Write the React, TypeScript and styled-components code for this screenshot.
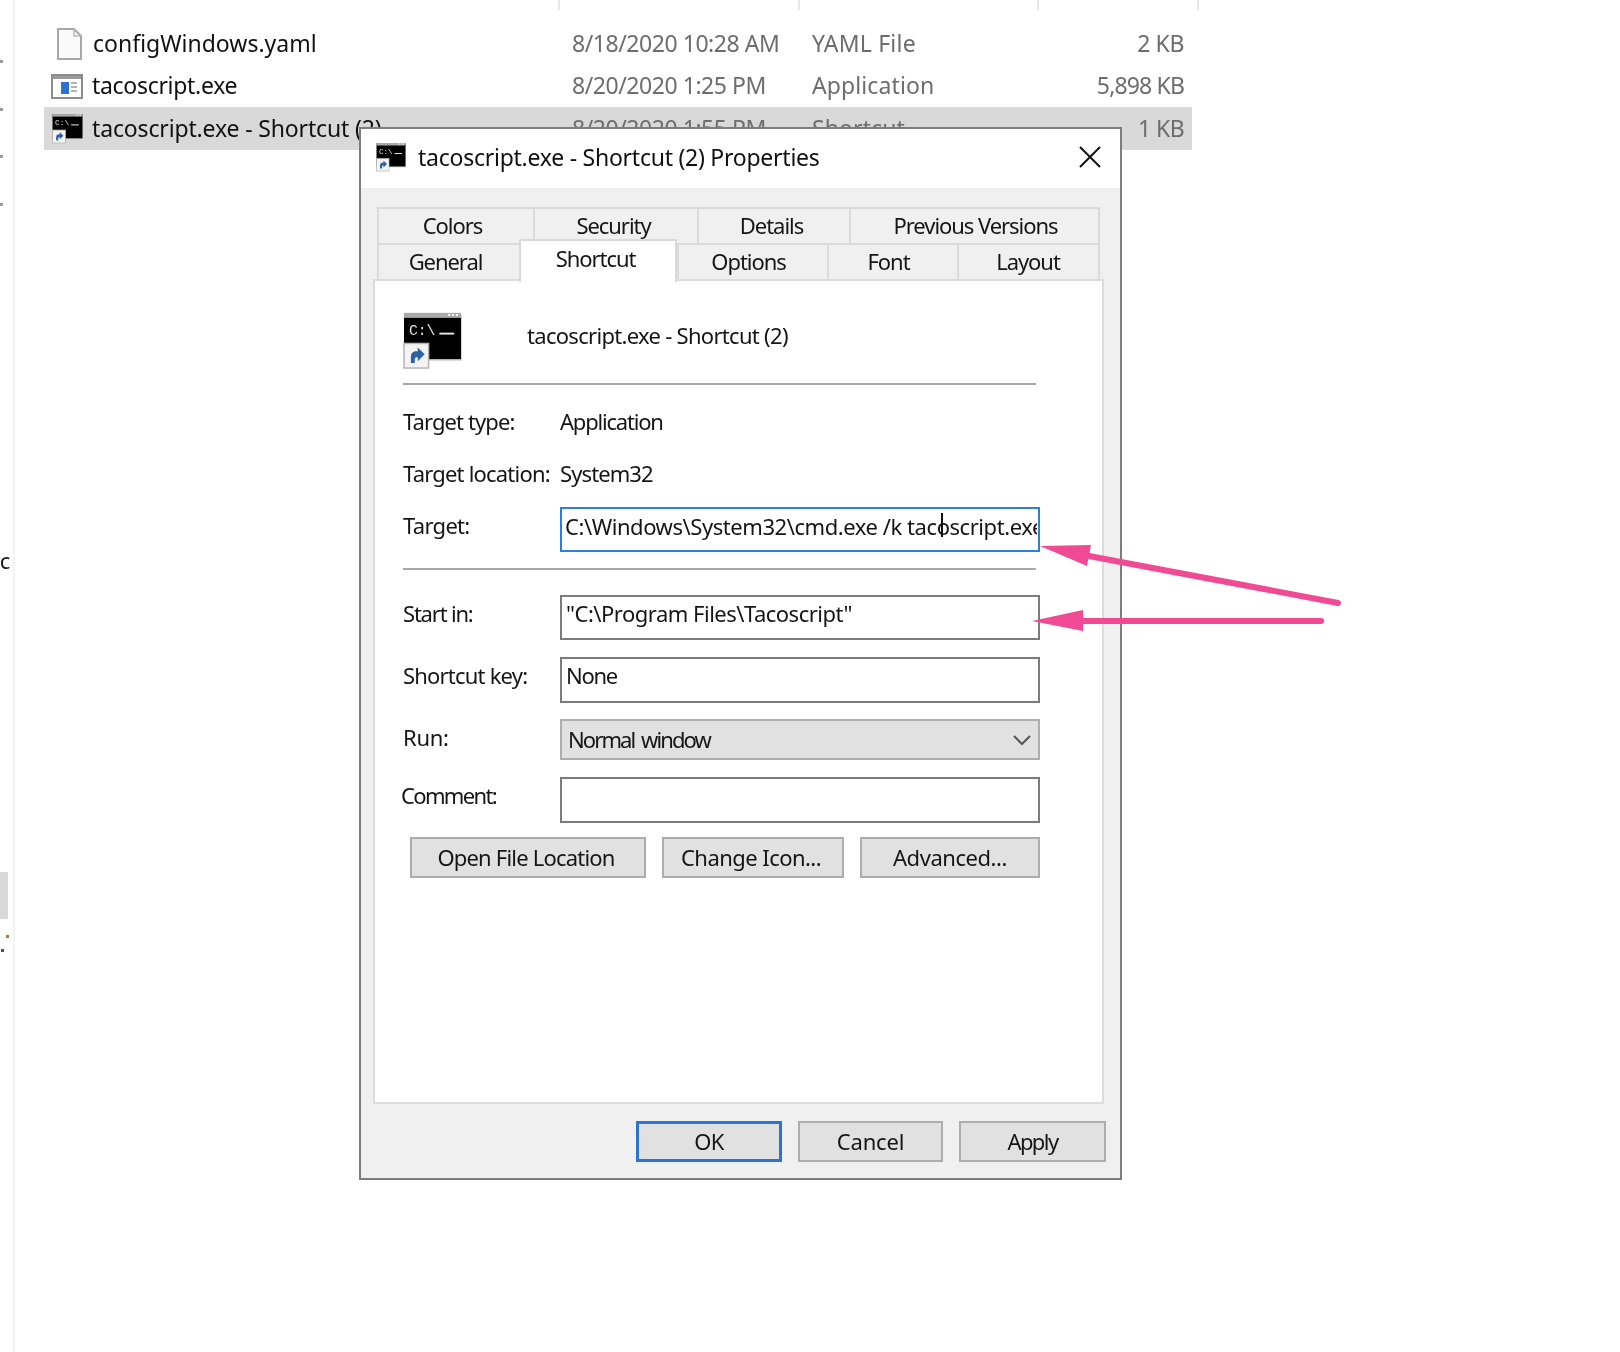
import React from 'react';
import styled, { createGlobalStyle } from 'styled-components';

const GlobalStyle = createGlobalStyle`
  html, body {
    margin: 0;
    padding: 0;
    background: #ffffff;
  }
`;

const Page = styled.div`
  position: relative;
  width: 1620px;
  height: 1352px;
  overflow: hidden;
  background: #ffffff;
  color: #1a1a1a;
  font-family: "Noto Sans", "Open Sans", sans-serif;
  filter: blur(0.55px);
`;

const SideRule = styled.div`
  position: absolute;
  left: 13px;
  top: 0;
  bottom: 0;
  width: 2px;
  background: #f3f3f3;
`;

const SideDot = styled.span<{ $top: number; $left: number; $color: string }>`
  position: absolute;
  left: ${(p) => p.$left}px;
  top: ${(p) => p.$top}px;
  width: 3px;
  height: 3px;
  background: ${(p) => p.$color};
`;

const SideBlock = styled.div`
  position: absolute;
  left: 0;
  top: 872px;
  width: 8px;
  height: 47px;
  background: #d9d9d9;
`;

const SideScrap = styled.span`
  position: absolute;
  left: -6px;
  top: 546px;
  font-size: 22px;
  line-height: 28px;
`;

const Explorer = styled.div`
  display: flex;
  flex-direction: column;
  width: 1199px;
`;

const ColumnHeads = styled.div`
  display: flex;
  height: 23px;
  padding-left: 558px;
`;

const ColumnHead = styled.div<{ $width: number }>`
  width: ${(p) => p.$width}px;
  height: 10px;
  border-left: 2px solid #e8e8e8;
  box-sizing: border-box;
`;

const FileList = styled.div`
  display: flex;
  flex-direction: column;
  width: 1148px;
  margin-left: 44px;
`;

const FileRow = styled.div<{ $selected?: boolean }>`
  display: grid;
  grid-template-columns: 49px 479px 240px 1fr 100px;
  align-items: center;
  height: ${(p) => (p.$selected ? 43 : 42)}px;
  padding-right: 8px;
  background: ${(p) => (p.$selected ? '#d9d9d9' : 'transparent')};
  font-size: 23px;
  white-space: nowrap;
`;

const FileIcon = styled.div<{ $nudge?: number }>`
  display: flex;
  justify-content: center;
  width: 44px;
  padding-left: ${(p) => p.$nudge ?? 1}px;
`;

const FileName = styled.span<{ $track?: number; $nudge?: number }>`
  padding-bottom: 2px;
  margin-left: ${(p) => p.$nudge ?? 0}px;
  letter-spacing: ${(p) => p.$track ?? 0}px;
  color: #111111;
`;

const FileMeta = styled.span<{ $track?: number }>`
  padding-bottom: 2px;
  color: #6d6d6d;
  letter-spacing: ${(p) => p.$track ?? -0.45}px;
`;

const FileSize = styled(FileMeta)`
  text-align: right;
`;

const Dialog = styled.div`
  position: absolute;
  left: 359px;
  top: 127px;
  width: 763px;
  height: 1053px;
  box-sizing: border-box;
  border: 2px solid #7d7d7d;
  background: #f0f0f0;
  color: #151515;
  font-size: 22px;
  letter-spacing: -0.55px;
`;

const TitleBar = styled.div`
  display: flex;
  align-items: center;
  box-sizing: border-box;
  height: 59px;
  padding: 0 19px 4px 15px;
  background: #ffffff;
`;

const TitleText = styled.span`
  flex: 1;
  margin-left: 12px;
  font-size: 23px;
  letter-spacing: -0.25px;
  color: #111111;
`;

const DialogBody = styled.div`
  display: flex;
  flex-direction: column;
  padding: 19px 0 0 16px;
`;

const TabRow = styled.div<{ $height: number }>`
  display: flex;
  width: 723px;
  height: ${(p) => p.$height}px;
`;

const Tab = styled.div<{ $width: number; $shift?: number; $selected?: boolean }>`
  display: flex;
  align-items: center;
  justify-content: center;
  box-sizing: border-box;
  width: ${(p) => p.$width}px;
  padding-right: ${(p) => Math.max(p.$shift ?? 0, 0)}px;
  padding-left: ${(p) => Math.max(-(p.$shift ?? 0), 0)}px;
  padding-bottom: 2px;
  border: 2px solid #dadada;
  border-right-width: 0;
  border-bottom-width: 0;
  letter-spacing: -1.05px;
  &:last-child {
    border-right-width: 2px;
  }
  ${(p) =>
    p.$selected
      ? `
    position: relative;
    z-index: 2;
    height: 43px;
    margin-top: -4px;
    padding-bottom: 8px;
    background: #ffffff;
    border-right-width: 2px;
  `
      : ''}
`;

const Panel = styled.div`
  position: relative;
  display: flex;
  flex-direction: column;
  box-sizing: border-box;
  width: 731px;
  height: 825px;
  margin-left: -4px;
  padding: 30px 0 0 28px;
  background: #ffffff;
  border: 2px solid #dcdcdc;
`;

const Header = styled.div`
  display: flex;
  align-items: flex-start;
  height: 57px;
`;

const HeaderName = styled.span`
  margin: 9px 0 0 65px;
  letter-spacing: -0.7px;
`;

const Rule = styled.div<{ $top: number }>`
  width: 633px;
  height: 2px;
  margin-top: ${(p) => p.$top}px;
  background: #a8a8a8;
`;

const FieldRow = styled.div<{ $height: number; $top?: number }>`
  display: flex;
  align-items: center;
  height: ${(p) => p.$height}px;
  margin-top: ${(p) => p.$top ?? 0}px;
`;

const FieldLabel = styled.div<{ $lift?: number; $nudge?: number; $track?: number }>`
  box-sizing: border-box;
  width: ${(p) => 157 - (p.$nudge ?? 0)}px;
  margin-left: ${(p) => p.$nudge ?? 0}px;
  padding-bottom: ${(p) => p.$lift ?? 3}px;
  letter-spacing: ${(p) => p.$track ?? -0.85}px;
  white-space: nowrap;
`;

const FieldValue = styled.div<{ $track?: number }>`
  padding-bottom: 3px;
  letter-spacing: ${(p) => p.$track ?? -0.9}px;
  white-space: nowrap;
`;

const TextBox = styled.div<{ $focused?: boolean; $lift?: number; $track?: number }>`
  position: relative;
  display: flex;
  align-items: center;
  box-sizing: border-box;
  width: 480px;
  height: 100%;
  padding: 0 ${(p) => (p.$focused ? 1 : 4)}px ${(p) => p.$lift ?? 10}px ${(p) => (p.$focused ? 3 : 4)}px;
  background: #ffffff;
  border: 2px solid ${(p) => (p.$focused ? '#2f7fd8' : '#7c7c7c')};
  letter-spacing: ${(p) => p.$track ?? -0.5}px;
`;

const TextValue = styled.span`
  flex: 1;
  overflow: hidden;
  white-space: nowrap;
`;

const Caret = styled.span`
  position: absolute;
  left: 379px;
  top: 4px;
  width: 2px;
  height: 24px;
  background: #111111;
`;

const SelectBox = styled.div`
  display: flex;
  align-items: center;
  justify-content: space-between;
  box-sizing: border-box;
  width: 480px;
  height: 100%;
  padding: 0 7px 2px 6px;
  background: #e1e1e1;
  border: 2px solid #adadad;
  letter-spacing: -1.9px;
  word-spacing: 3px;
`;

const ChevronSlot = styled.span`
  display: flex;
  margin-top: 3px;
`;

const ActionRow = styled.div`
  display: flex;
  gap: 16px;
  height: 41px;
  margin: 14px 0 0 7px;
`;

const PushButton = styled.div<{ $width: number; $primary?: boolean; $track?: number; $shift?: number }>`
  display: flex;
  align-items: center;
  justify-content: center;
  box-sizing: border-box;
  width: ${(p) => p.$width}px;
  height: 41px;
  padding-bottom: 2px;
  padding-right: ${(p) => p.$shift ?? 0}px;
  background: #e1e1e1;
  border: ${(p) => (p.$primary ? '3px solid #2b74d0' : '2px solid #adadad')};
  letter-spacing: ${(p) => p.$track ?? -0.55}px;
`;

const Footer = styled.div`
  display: flex;
  justify-content: flex-end;
  gap: 16px;
  width: 734px;
  margin: 17px 0 0 -5px;
`;

const ArrowLayer = styled.svg`
  position: absolute;
  left: 0;
  top: 0;
  width: 1620px;
  height: 1352px;
  pointer-events: none;
`;

const ConsoleIcon = ({ size }: { size: number }) => (
  <svg width={size} height={size} viewBox="0 0 60 58">
    <rect x="3" y="3" width="57" height="47" fill="#c4c4c4" opacity="0.6" />
    <rect x="1" y="1" width="58" height="47" fill="#000000" />
    <rect x="1" y="1" width="58" height="5" fill="#a9a9a9" />
    <rect x="46" y="2" width="2" height="2" fill="#ffffff" />
    <rect x="50" y="2" width="2" height="2" fill="#ffffff" />
    <rect x="54" y="2" width="2" height="2" fill="#ffffff" />
    <text x="6" y="23" fontFamily="Liberation Mono, monospace" fontSize="15" letterSpacing="0" fill="#e2e2e2">C:\</text>
    <rect x="37" y="21" width="15" height="2" fill="#e2e2e2" />
    <rect x="1" y="32" width="25" height="25" fill="#f4f4f4" stroke="#b5b5b5" strokeWidth="1.5" />
    <path d="M8 52v-6c0-4 2-6 6-6h1v-4l7 7-7 7v-4h-1c-2 0-2 2-2 6z" fill="#2d62a8" />
  </svg>
);

const AppIcon = () => (
  <svg width="32" height="25" viewBox="0 0 32 25">
    <rect x="1" y="1" width="30" height="23" fill="#ffffff" stroke="#8c8c8c" strokeWidth="2" />
    <rect x="2" y="2" width="28" height="3" fill="#9a9a9a" />
    <rect x="10" y="8" width="8" height="12" fill="#2d72d2" />
    <path d="M20 9h6M20 13h6M20 17h6" stroke="#9a9a9a" strokeWidth="1.5" />
  </svg>
);

const DocIcon = () => (
  <svg width="25" height="32" viewBox="0 0 25 32">
    <path d="M1 1h16l7 7v23H1z" fill="#fafafa" stroke="#a8a8a8" strokeWidth="2" />
    <path d="M17 1v7h7" fill="none" stroke="#b8b8b8" strokeWidth="1.5" />
  </svg>
);

const CloseIcon = () => (
  <svg width="22" height="22" viewBox="0 0 22 22">
    <path d="M1 1l20 20M21 1L1 21" stroke="#111111" strokeWidth="2" />
  </svg>
);

const Chevron = () => (
  <svg width="18" height="11" viewBox="0 0 18 11">
    <path d="M1 1l8 8 8-8" fill="none" stroke="#555555" strokeWidth="2" />
  </svg>
);

const App = () => (
  <Page>
    <GlobalStyle />
    <SideRule />
    <SideDot $left={0} $top={60} $color="#9a9a9a" />
    <SideDot $left={0} $top={108} $color="#9a9a9a" />
    <SideDot $left={0} $top={155} $color="#9a9a9a" />
    <SideDot $left={0} $top={203} $color="#9a9a9a" />
    <SideScrap>ic</SideScrap>
    <SideBlock />
    <SideDot $left={6} $top={935} $color="#a87a4a" />
    <SideDot $left={1} $top={949} $color="#4a4a8a" />

    <Explorer>
      <ColumnHeads>
        <ColumnHead $width={240} />
        <ColumnHead $width={240} />
        <ColumnHead $width={160} />
        <ColumnHead $width={2} />
      </ColumnHeads>
      <FileList>
        <FileRow>
          <FileIcon $nudge={3}><DocIcon /></FileIcon>
          <FileName>configWindows.yaml</FileName>
          <FileMeta>8/18/2020 10:28 AM</FileMeta>
          <FileMeta $track={0.2}>YAML File</FileMeta>
          <FileSize $track={-0.4}>2 KB</FileSize>
        </FileRow>
        <FileRow>
          <FileIcon><AppIcon /></FileIcon>
          <FileName $track={-0.3} $nudge={-1}>tacoscript.exe</FileName>
          <FileMeta>8/20/2020 1:25 PM</FileMeta>
          <FileMeta $track={0.1}>Application</FileMeta>
          <FileSize $track={-0.85}>5,898 KB</FileSize>
        </FileRow>
        <FileRow $selected>
          <FileIcon><ConsoleIcon size={31} /></FileIcon>
          <FileName $track={-0.15} $nudge={-1}>tacoscript.exe - Shortcut (2)</FileName>
          <FileMeta>8/20/2020 1:55 PM</FileMeta>
          <FileMeta $track={0.1}>Shortcut</FileMeta>
          <FileSize $track={-0.6}>1 KB</FileSize>
        </FileRow>
      </FileList>
    </Explorer>

    <Dialog>
      <TitleBar>
        <ConsoleIcon size={30} />
        <TitleText>tacoscript.exe - Shortcut (2) Properties</TitleText>
        <CloseIcon />
      </TitleBar>
      <DialogBody>
        <TabRow $height={36}>
          <Tab $width={156} $shift={7}>Colors</Tab>
          <Tab $width={164} $shift={5}>Security</Tab>
          <Tab $width={152} $shift={5}>Details</Tab>
          <Tab $width={251} $shift={-2}>Previous Versions</Tab>
        </TabRow>
        <TabRow $height={36}>
          <Tab $width={142} $shift={7}>General</Tab>
          <Tab $width={158} $shift={5} $selected>Shortcut</Tab>
          <Tab $width={150} $shift={9}>Options</Tab>
          <Tab $width={130} $shift={9}>Font</Tab>
          <Tab $width={143} $shift={1}>Layout</Tab>
        </TabRow>
        <Panel>
          <Header>
            <ConsoleIcon size={59} />
            <HeaderName>tacoscript.exe - Shortcut (2)</HeaderName>
          </Header>
          <Rule $top={15} />
          <FieldRow $height={52} $top={11}>
            <FieldLabel $track={-0.9}>Target type:</FieldLabel>
            <FieldValue $track={-1.2}>Application</FieldValue>
          </FieldRow>
          <FieldRow $height={52}>
            <FieldLabel $track={-0.8}>Target location:</FieldLabel>
            <FieldValue>System32</FieldValue>
          </FieldRow>
          <FieldRow $height={45} $top={7}>
            <FieldLabel $lift={9} $track={-0.7}>Target:</FieldLabel>
            <TextBox $focused $lift={8} $track={-0.44}>
              <TextValue>C:\Windows\System32\cmd.exe /k tacoscript.exe</TextValue>
              <Caret />
            </TextBox>
          </FieldRow>
          <Rule $top={16} />
          <FieldRow $height={45} $top={25}>
            <FieldLabel $lift={10} $track={-1.2}>Start in:</FieldLabel>
            <TextBox>
              <TextValue>"C:\Program Files\Tacoscript"</TextValue>
            </TextBox>
          </FieldRow>
          <FieldRow $height={46} $top={17}>
            <FieldLabel $lift={10} $track={-0.8}>Shortcut key:</FieldLabel>
            <TextBox $lift={11} $track={-1.3}>
              <TextValue>None</TextValue>
            </TextBox>
          </FieldRow>
          <FieldRow $height={41} $top={16}>
            <FieldLabel $lift={6} $track={-0.3}>Run:</FieldLabel>
            <SelectBox>
              Normal window
              <ChevronSlot><Chevron /></ChevronSlot>
            </SelectBox>
          </FieldRow>
          <FieldRow $height={46} $top={17}>
            <FieldLabel $lift={10} $nudge={-2} $track={-1.65}>Comment:</FieldLabel>
            <TextBox />
          </FieldRow>
          <ActionRow>
            <PushButton $width={236} $track={-0.8} $shift={4}>Open File Location</PushButton>
            <PushButton $width={182} $shift={4}>Change Icon...</PushButton>
            <PushButton $width={180} $track={-0.45}>Advanced...</PushButton>
          </ActionRow>
        </Panel>
        <Footer>
          <PushButton $width={146} $primary>OK</PushButton>
          <PushButton $width={145} $track={-0.2}>Cancel</PushButton>
          <PushButton $width={147} $track={-1.6}>Apply</PushButton>
        </Footer>
      </DialogBody>
    </Dialog>

    <ArrowLayer viewBox="0 0 1620 1352">
      <path d="M1089 556L1338 603" stroke="#f04a94" strokeWidth="6" strokeLinecap="round" />
      <path d="M1040 546L1091 545L1087 566z" fill="#f04a94" />
      <path d="M1080 621L1321 621" stroke="#f04a94" strokeWidth="6" strokeLinecap="round" />
      <path d="M1032 621L1083 610L1083 631z" fill="#f04a94" />
    </ArrowLayer>
  </Page>
);

export default App;
